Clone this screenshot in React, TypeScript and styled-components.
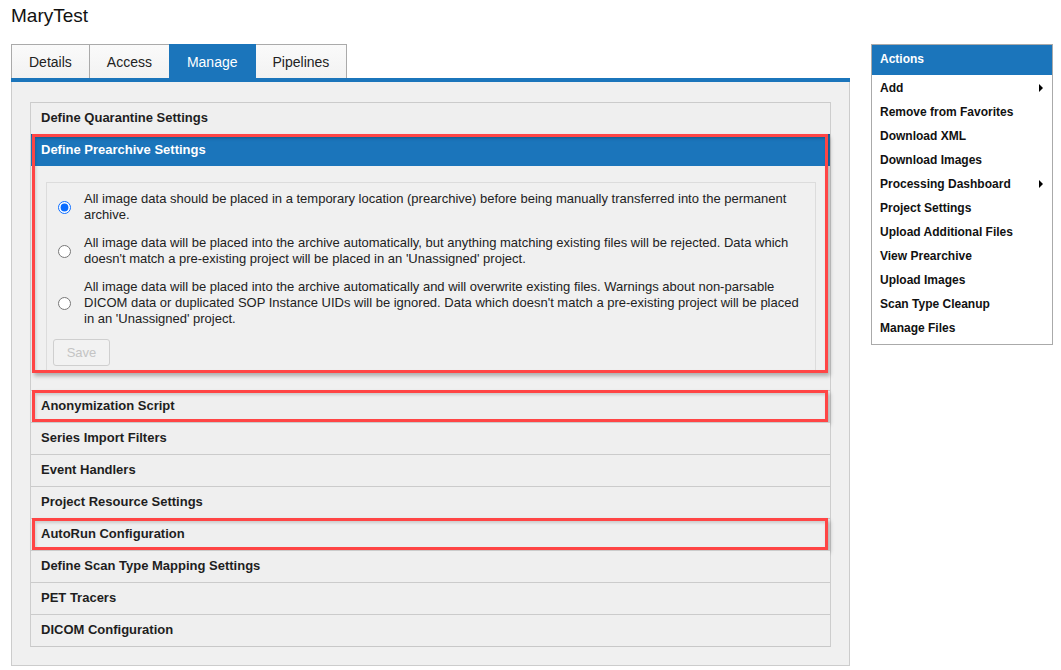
import styled, { createGlobalStyle } from 'styled-components'

const BLUE = '#1b75bb'

const sections = [
  'Anonymization Script',
  'Series Import Filters',
  'Event Handlers',
  'Project Resource Settings',
  'AutoRun Configuration',
  'Define Scan Type Mapping Settings',
  'PET Tracers',
  'DICOM Configuration',
]

const marked = ['Anonymization Script', 'AutoRun Configuration']

const options = [
  'All image data should be placed in a temporary location (prearchive) before being manually transferred into the permanent archive.',
  "All image data will be placed into the archive automatically, but anything matching existing files will be rejected. Data which doesn't match a pre-existing project will be placed in an 'Unassigned' project.",
  "All image data will be placed into the archive automatically and will overwrite existing files. Warnings about non-parsable DICOM data or duplicated SOP Instance UIDs will be ignored. Data which doesn't match a pre-existing project will be placed in an 'Unassigned' project.",
]

const actions = [
  { label: 'Add', sub: true },
  { label: 'Remove from Favorites' },
  { label: 'Download XML' },
  { label: 'Download Images' },
  { label: 'Processing Dashboard', sub: true },
  { label: 'Project Settings' },
  { label: 'Upload Additional Files' },
  { label: 'View Prearchive' },
  { label: 'Upload Images' },
  { label: 'Scan Type Cleanup' },
  { label: 'Manage Files' },
]

const tabs = ['Details', 'Access', 'Manage', 'Pipelines']

const App = () => {
  return (
    <>
      <GlobalStyle />
      <Page>
        <Main>
          <Title>MaryTest</Title>
          <TabBar>
            {tabs.map((t) => (
              <Tab key={t} $active={t === 'Manage'}>{t}</Tab>
            ))}
          </TabBar>
          <Panel>
            <Accordion>
              <Row>Define Quarantine Settings</Row>
              <Section>
                <Row $active>Define Prearchive Settings</Row>
                <SectionBody>
                  <Fieldset>
                    {options.map((text, i) => (
                      <Option key={i}>
                        <Radio type="radio" name="prearchive" defaultChecked={i === 0} />
                        <span>{text}</span>
                      </Option>
                    ))}
                    <SaveButton disabled>Save</SaveButton>
                  </Fieldset>
                </SectionBody>
                <Mark $inset="0 2px 17px 1px" />
              </Section>
              {sections.map((s) => (
                <Section key={s}>
                  <Row>{s}</Row>
                  {marked.includes(s) && <Mark $inset="0 2px 0 1px" />}
                </Section>
              ))}
            </Accordion>
          </Panel>
        </Main>
        <Sidebar>
          <ActionsHeader>Actions</ActionsHeader>
          <ActionList>
            {actions.map((a) => (
              <ActionItem key={a.label}>
                {a.label}
                {a.sub && <Caret />}
              </ActionItem>
            ))}
          </ActionList>
        </Sidebar>
      </Page>
    </>
  )
}

const GlobalStyle = createGlobalStyle`
  body {
    margin: 0;
    background: #fff;
    font-family: 'Liberation Sans', Arial, sans-serif;
    color: #222;
  }
`

const Page = styled.div`
  display: flex;
  gap: 21px;
  padding: 5px 8px 0 11px;
  width: 1061px;
  box-sizing: border-box;
`

const Main = styled.div`
  width: 839px;
  flex-shrink: 0;
`

const Title = styled.h1`
  margin: 0 0 17px;
  font-size: 19px;
  line-height: 22px;
  font-weight: normal;
  color: #111;
`

const TabBar = styled.div`
  display: flex;
  border-bottom: 4px solid ${BLUE};
`

const Tab = styled.div<{ $active?: boolean }>`
  height: 34px;
  line-height: 34px;
  padding: 0 17px;
  font-size: 14px;
  border: 1px solid ${(p) => (p.$active ? BLUE : '#aaa')};
  border-bottom: none;
  box-sizing: border-box;
  margin-right: -1px;
  background: ${(p) => (p.$active ? BLUE : 'linear-gradient(#fafafa, #f2f2f2)')};
  color: ${(p) => (p.$active ? '#fff' : '#222')};
  position: relative;
  z-index: ${(p) => (p.$active ? 1 : 0)};
`

const Panel = styled.div`
  background: #f0f0f0;
  border: 1px solid #ccc;
  border-top: none;
  padding: 20px 18px 18px 18px;
`

const Accordion = styled.div`
  border-left: 1px solid #cdcdcd;
  border-right: 1px solid #cdcdcd;
  border-bottom: 1px solid #c8c8c8;
`

const Section = styled.div`
  position: relative;
`

const Row = styled.div<{ $active?: boolean }>`
  height: 32px;
  box-sizing: border-box;
  border-top: 1px solid ${(p) => (p.$active ? '#135d96' : '#cbcbcb')};
  padding: 0 10px;
  line-height: 30px;
  font-size: 13px;
  font-weight: bold;
  background: ${(p) => (p.$active ? `linear-gradient(#17649f, ${BLUE} 4px)` : '#efefef')};
  color: ${(p) => (p.$active ? '#fff' : '#1e1e1e')};
`

const SectionBody = styled.div`
  padding: 16px 14px 17px 15px;
`

const Fieldset = styled.div`
  border: 1px solid #dcdcdc;
  padding: 8px 6px 6px 6px;
  display: flex;
  flex-direction: column;
  align-items: flex-start;
`

const Option = styled.label`
  display: flex;
  align-items: center;
  font-size: 13px;
  line-height: 16px;
  color: #222;
  margin-bottom: 12px;
  padding-right: 2px;

  span {
    width: 724px;
  }
`

const Radio = styled.input`
  width: 13px;
  height: 13px;
  margin: 0 13px 0 5px;
  flex-shrink: 0;
  accent-color: #0a6cff;
`

const SaveButton = styled.button`
  width: 57px;
  height: 27px;
  font-family: inherit;
  font-size: 13px;
  color: #c4c4c4;
  background: #f2f2f2;
  border: 1px solid #cfcfcf;
  border-radius: 3px;
  padding: 0;
`

const Mark = styled.div<{ $inset: string }>`
  position: absolute;
  inset: ${(p) => p.$inset};
  border: 3px solid #ff4545;
  box-shadow: 2px 3px 4px rgba(0, 0, 0, 0.28), inset 1px 2px 3px rgba(0, 0, 0, 0.15);
  pointer-events: none;
`

const Sidebar = styled.div`
  width: 182px;
  margin-top: 39px;
  border: 1px solid #aaa;
  align-self: flex-start;
  box-sizing: border-box;
`

const ActionsHeader = styled.div`
  background: ${BLUE};
  color: #fff;
  font-size: 12px;
  font-weight: bold;
  height: 30px;
  line-height: 28px;
  padding: 0 8px;
`

const ActionList = styled.div`
  padding: 1px 0 4px;
  display: flex;
  flex-direction: column;
`

const ActionItem = styled.div`
  display: flex;
  align-items: center;
  justify-content: space-between;
  height: 24px;
  padding: 0 9px 0 8px;
  font-size: 12px;
  font-weight: bold;
  color: #111;
`

const Caret = styled.span`
  width: 0;
  height: 0;
  border-left: 4px solid #000;
  border-top: 4px solid transparent;
  border-bottom: 4px solid transparent;
`

export default App
